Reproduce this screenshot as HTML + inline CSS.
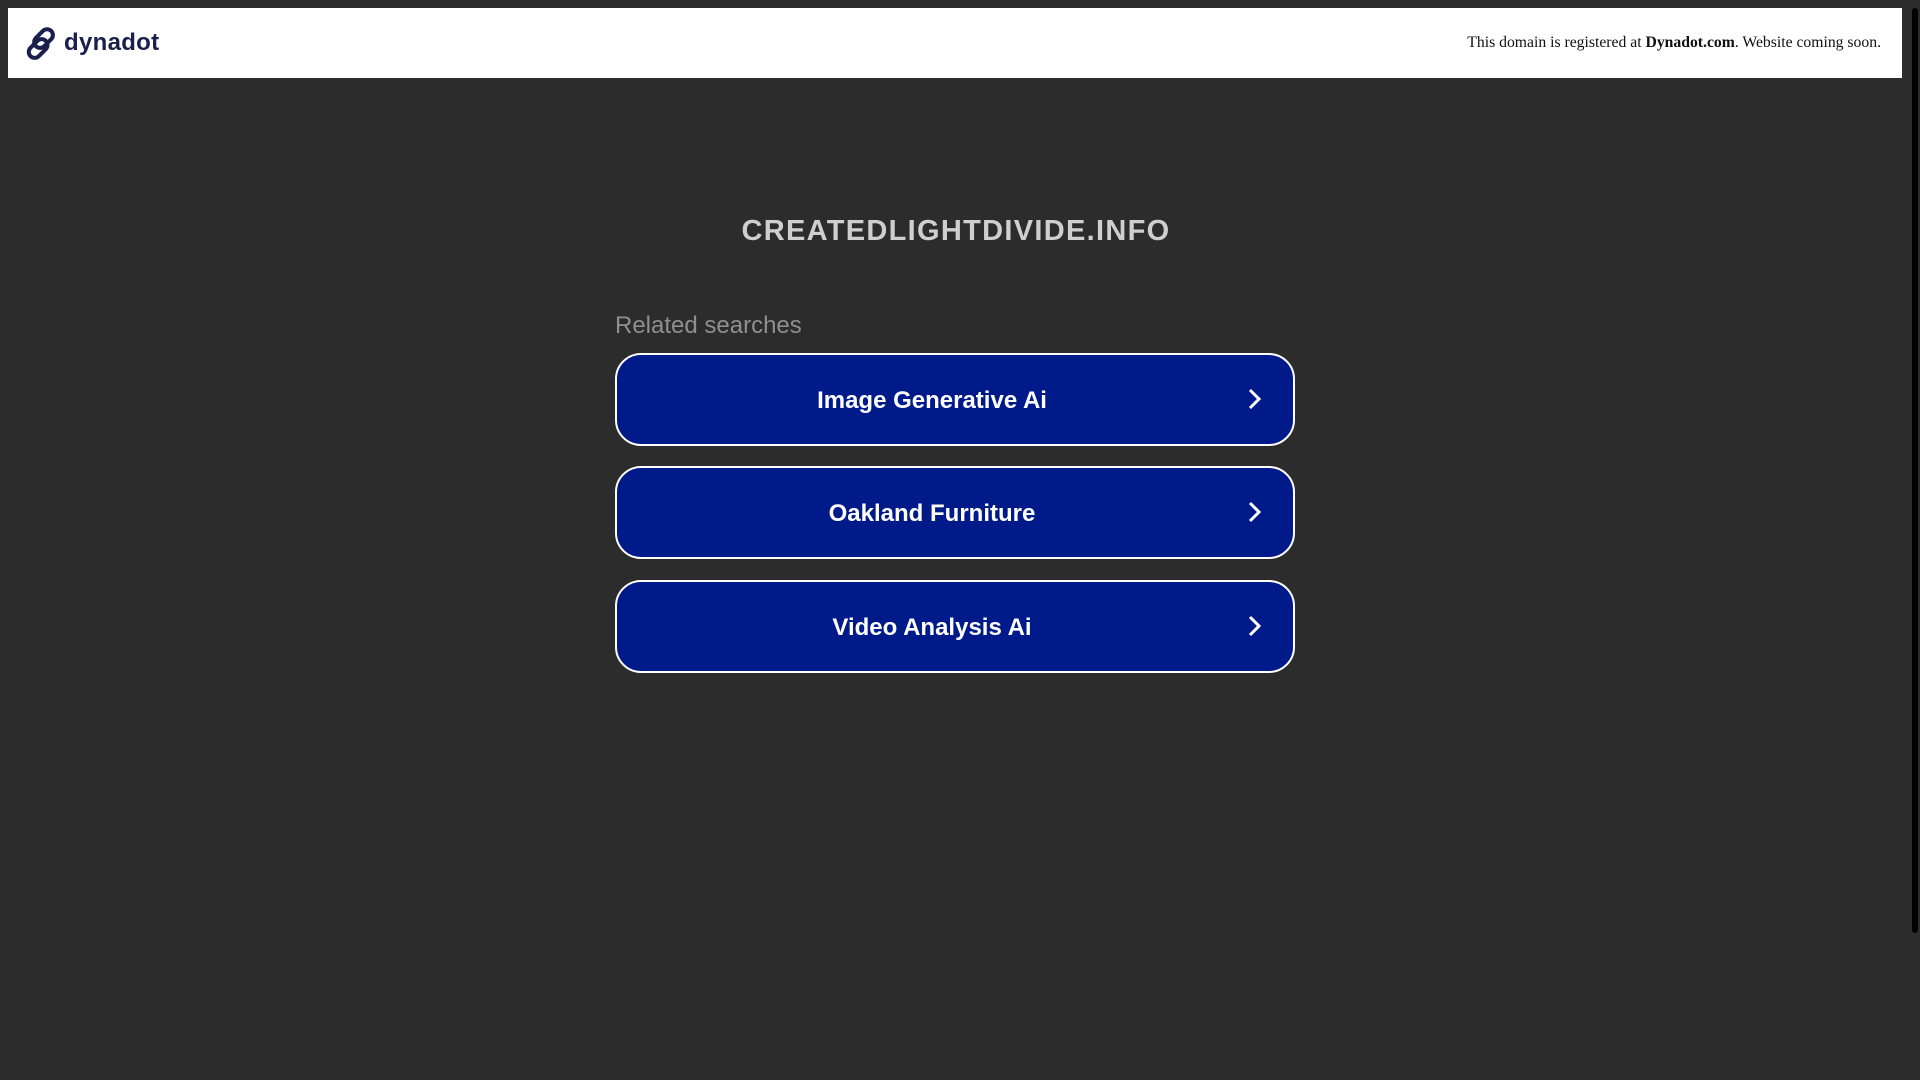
<!DOCTYPE html>
<html><head><meta charset="utf-8"><style>
html,body{margin:0;padding:0;width:1920px;height:1080px;overflow:hidden;background:#2c2c2c;font-family:"Liberation Sans",sans-serif;}
.hdr{position:absolute;left:8px;top:8px;width:1894px;height:70px;background:#fff;}
.logo{position:absolute;left:18px;top:18px;}
.logotext{position:absolute;left:56px;top:21px;font-size:24px;font-weight:bold;color:#1b1f4b;letter-spacing:0.3px;}
.note{position:absolute;right:21px;top:26px;font-family:"Liberation Serif",serif;font-size:15.7px;color:#111;}
.sb{position:absolute;left:1910px;top:0;width:10px;height:1080px;background:#2c2c2c;}
.sb div{position:absolute;left:2px;top:8px;width:6px;height:925px;background:#000;border-radius:3px;}
.title{position:absolute;left:0;width:1912px;top:215px;text-align:center;font-size:29px;font-weight:bold;color:#cfcfcf;letter-spacing:1.3px;}
.rel{position:absolute;left:615px;top:312px;font-size:24px;color:#8f8f8f;}
.btn{position:absolute;left:615px;width:676px;height:89px;background:#001a8a;border:2px solid #fff;border-radius:26px;}
.btn span{position:absolute;left:0;width:630px;top:32px;text-align:center;color:#fff;font-weight:bold;font-size:24px;}
.btn svg{position:absolute;left:630px;top:33px;}
</style></head><body>
<div class="hdr">
<svg class="logo" width="36" height="36" viewBox="0 0 40 40"><g fill="none" stroke="#1b1f4b" stroke-width="4.5"><rect x="13" y="2" width="13" height="24" rx="6.5" transform="rotate(45 19.5 14)"/><rect x="7" y="13" width="13" height="24" rx="6.5" transform="rotate(45 13.5 25)"/></g></svg>
<div class="logotext">dynadot</div>
<div class="note">This domain is registered at <b>Dynadot.com</b>. Website coming soon.</div>
</div>
<div class="sb"><div></div></div>
<div class="title">CREATEDLIGHTDIVIDE.INFO</div>
<div class="rel">Related searches</div>
<div class="btn" style="top:353px"><span>Image Generative Ai</span><svg width="16" height="22" viewBox="0 0 16 22"><path d="M3 2l9 9-9 9" fill="none" stroke="#fff" stroke-width="3"/></svg></div>
<div class="btn" style="top:466px"><span>Oakland Furniture</span><svg width="16" height="22" viewBox="0 0 16 22"><path d="M3 2l9 9-9 9" fill="none" stroke="#fff" stroke-width="3"/></svg></div>
<div class="btn" style="top:580px"><span>Video Analysis Ai</span><svg width="16" height="22" viewBox="0 0 16 22"><path d="M3 2l9 9-9 9" fill="none" stroke="#fff" stroke-width="3"/></svg></div>
</body></html>
